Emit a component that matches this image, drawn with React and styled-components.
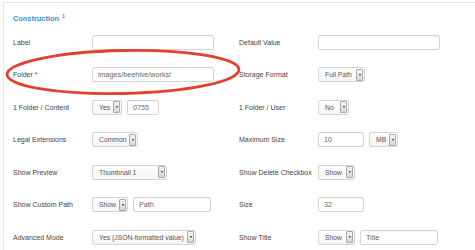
import styled, { createGlobalStyle } from "styled-components";

const GlobalStyle = createGlobalStyle`
  html, body {
    margin: 0;
    padding: 0;
    background: #fff;
    width: 475px;
    height: 250px;
    overflow: hidden;
  }
  body {
    font-family: "Liberation Sans", Arial, sans-serif;
  }
`;

const Page = styled.div`
  position: relative;
  width: 475px;
  height: 250px;
  padding: 2px 0 0 3px;
  box-sizing: border-box;
`;

const Panel = styled.div`
  border-top: 1px solid #e6e6e6;
  border-left: 1px solid #e6e6e6;
  padding: 8px 0 0 9px;
  height: 260px;
  box-sizing: border-box;
`;

const Heading = styled.div`
  color: #3d8fdc;
  font-size: 7.4px;
  font-weight: bold;
  height: 11px;
  line-height: 11px;
  sup {
    font-size: 5.5px;
    margin-left: 3px;
    vertical-align: 3px;
  }
`;

const Grid = styled.div`
  display: grid;
  grid-template-columns: 226px 226px;
  grid-auto-rows: 32.5px;
  margin-top: 4.2px;
`;

const Field = styled.div`
  display: flex;
  align-items: center;
`;

const Label = styled.div`
  width: 79px;
  flex-shrink: 0;
  font-size: 7px;
  color: #444;
  white-space: nowrap;
`;

const Controls = styled.div`
  display: flex;
  align-items: center;
  gap: 5px;
`;

const Input = styled.div`
  width: ${(p) => p.$w}px;
  height: 15px;
  box-sizing: border-box;
  border: 1px solid #d4d4d4;
  border-radius: 2px;
  background: #fff;
  font-size: 7.2px;
  color: #666;
  padding-left: 5px;
  display: flex;
  align-items: center;
  box-shadow: inset 0 1px 1px rgba(0, 0, 0, 0.04);
`;

const Select = styled.div`
  width: ${(p) => p.$w}px;
  height: 15px;
  box-sizing: border-box;
  border: 1px solid #d4d4d4;
  border-radius: 2px;
  background: linear-gradient(#fff, #f4f4f4);
  font-size: 6.8px;
  color: #555;
  padding-left: 6px;
  display: flex;
  align-items: center;
  justify-content: space-between;
  white-space: nowrap;
`;

const Caret = styled.div`
  width: 7px;
  height: 12px;
  margin-right: 1px;
  flex-shrink: 0;
  box-sizing: border-box;
  border: 1px solid #a9a9a9;
  border-radius: 1px;
  background: linear-gradient(#f4f4f4, #d6d6d6);
  display: flex;
  align-items: center;
  justify-content: center;
  &::after {
    content: "";
    border-left: 1.5px solid transparent;
    border-right: 1.5px solid transparent;
    border-top: 2px solid #222;
  }
`;

const Ellipse = styled.svg`
  position: absolute;
  left: 0;
  top: 0;
  pointer-events: none;
`;

function Sel({ w, children }) {
  return (
    <Select $w={w}>
      <span>{children}</span>
      <Caret />
    </Select>
  );
}

export default function App() {
  return (
    <Page>
      <GlobalStyle />
      <Panel>
        <Heading>
          Construction<sup>1</sup>
        </Heading>
        <Grid>
          <Field>
            <Label>Label</Label>
            <Input $w={122} />
          </Field>
          <Field>
            <Label>Default Value</Label>
            <Input $w={122} />
          </Field>

          <Field>
            <Label>Folder *</Label>
            <Input $w={122}>images/beehive/works/</Input>
          </Field>
          <Field>
            <Label>Storage Format</Label>
            <Sel w={47}>Full Path</Sel>
          </Field>

          <Field>
            <Label>1 Folder / Content</Label>
            <Controls>
              <Sel w={30}>Yes</Sel>
              <Input $w={32}>0755</Input>
            </Controls>
          </Field>
          <Field>
            <Label>1 Folder / User</Label>
            <Sel w={31}>No</Sel>
          </Field>

          <Field>
            <Label>Legal Extensions</Label>
            <Sel w={46}>Common</Sel>
          </Field>
          <Field>
            <Label>Maximum Size</Label>
            <Controls>
              <Input $w={46}>10</Input>
              <Sel w={29}>MB</Sel>
            </Controls>
          </Field>

          <Field>
            <Label>Show Preview</Label>
            <Sel w={75}>Thumbnail 1</Sel>
          </Field>
          <Field>
            <Label>Show Delete Checkbox</Label>
            <Sel w={37}>Show</Sel>
          </Field>

          <Field>
            <Label>Show Custom Path</Label>
            <Controls>
              <Sel w={36}>Show</Sel>
              <Input $w={78}>Path</Input>
            </Controls>
          </Field>
          <Field>
            <Label>Size</Label>
            <Input $w={46}>32</Input>
          </Field>

          <Field>
            <Label>Advanced Mode</Label>
            <Sel w={104}>Yes (JSON-formatted value)</Sel>
          </Field>
          <Field>
            <Label>Show Title</Label>
            <Controls>
              <Sel w={37}>Show</Sel>
              <Input $w={78}>Title</Input>
            </Controls>
          </Field>
        </Grid>
      </Panel>
      <Ellipse width="475" height="250">
        <ellipse
          cx="123"
          cy="72"
          rx="116"
          ry="21.5"
          fill="none"
          stroke="#e2412f"
          strokeWidth="2.8"
          transform="rotate(-1.2 123 72)"
        />
      </Ellipse>
    </Page>
  );
}
